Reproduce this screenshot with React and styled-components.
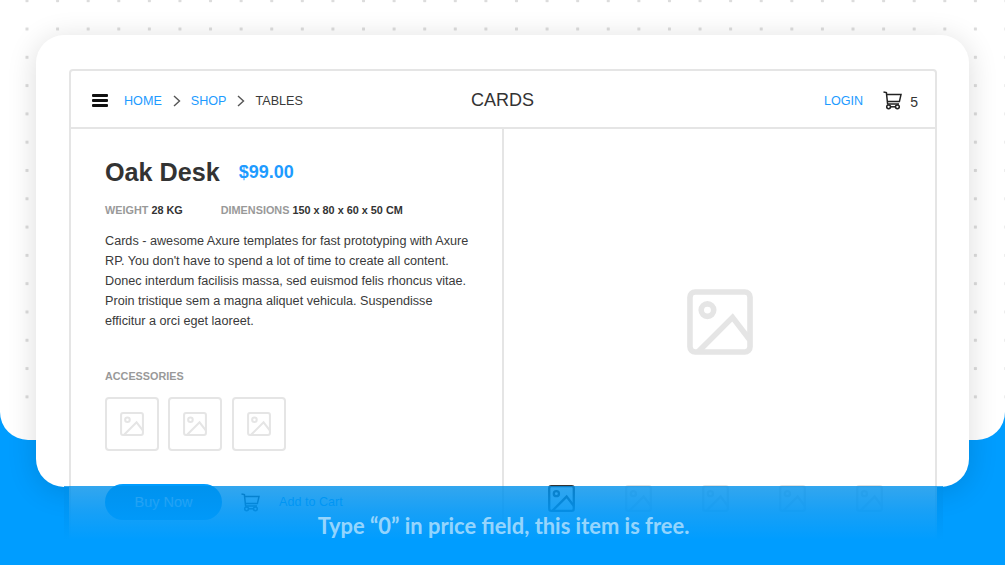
import React from "react";
import styled, { createGlobalStyle } from "styled-components";

const Global = createGlobalStyle`
  html, body { margin: 0; padding: 0; background: #009dff; }
  body { font-family: "Liberation Sans", Arial, sans-serif; }
`;

const Page = styled.div`
  position: relative;
  width: 1005px;
  height: 565px;
  overflow: hidden;
  background: #009dff;
`;

const Backdrop = styled.div`
  box-sizing: border-box;
  height: 440px;
  padding: 35px 36px 0;
  border-radius: 0 0 28px 28px;
  background:
    linear-gradient(#fff, #fff) bottom / 100% 30px no-repeat,
    radial-gradient(circle, #dcdcdc 0, #dcdcdc 1.4px, transparent 2px) 11.7px 14.85px / 30.6px 28.3px,
    #fff;
`;

const Card = styled.div`
  box-sizing: border-box;
  width: 933px;
  height: 452px;
  padding: 34px 32px 0 33px;
  border-radius: 28px;
  background: #fff;
  box-shadow: 0 4px 30px rgba(0, 0, 0, 0.14);
`;

const Wireframe = styled.div`
  box-sizing: border-box;
  width: 868px;
  height: 500px;
  border: 2px solid #e5e5e5;
  border-radius: 4px;
  background: #fff;
  color: #333;
`;

const Header = styled.header`
  box-sizing: border-box;
  height: 58px;
  padding: 3px 17px 0 21px;
  display: grid;
  grid-template-columns: 1fr auto 1fr;
  align-items: center;
  border-bottom: 2px solid #e5e5e5;
`;

const NavLeft = styled.nav`
  display: flex;
  align-items: center;
  font-size: 12.6px;
`;

const Burger = styled.span`
  display: flex;
  flex-direction: column;
  gap: 2px;
  width: 16px;
  margin-right: 16px;
  & > i { display: block; height: 3px; border-radius: 1px; background: #111; }
`;

const Crumb = styled.span`
  color: ${(p) => (p.$current ? "#3a3a3a" : "#1e9bff")};
`;

const Chevron = styled.svg`
  width: 8px;
  height: 12px;
  margin: 0 10px 0 11px;
  fill: none;
  stroke: #555;
  stroke-width: 1.4;
`;

const Brand = styled.h1`
  margin: 0 5px 0 0;
  font-size: 18px;
  font-weight: 400;
  color: #333;
`;

const NavRight = styled.div`
  display: flex;
  align-items: center;
  justify-content: flex-end;
`;

const Login = styled.span`
  font-size: 12.6px;
  color: #1e9bff;
  margin-right: 20px;
`;

const CartCount = styled.span`
  font-size: 14px;
  color: #333;
  margin: 2px 0 0 8px;
`;

const CartIcon = styled.svg`
  display: block;
  flex: none;
  width: 19px;
  height: 19px;
  fill: none;
  stroke: #222;
  stroke-width: 1.5;
`;

const Body = styled.div`
  display: grid;
  grid-template-columns: 433px 1fr;
  height: 440px;
`;

const Info = styled.section`
  box-sizing: border-box;
  padding: 27px 34px 0 34px;
  border-right: 2px solid #e5e5e5;
`;

const TitleRow = styled.div`
  display: flex;
  align-items: center;
  gap: 19px;
  height: 32px;
`;

const Title = styled.h2`
  margin: 0;
  font-size: 25.2px;
  font-weight: 700;
  color: #333;
`;

const Price = styled.span`
  font-size: 18px;
  font-weight: 700;
  color: #1e9bff;
`;

const Meta = styled.div`
  display: flex;
  gap: 38px;
  margin-top: 15px;
  font-size: 10.85px;
  line-height: 14px;
  font-weight: 700;
  color: #333;
`;

const MetaLabel = styled.span`
  color: #999;
`;

const Description = styled.p`
  margin: 14px 0 0;
  width: 368px;
  font-size: 12.65px;
  line-height: 20px;
  color: #3a3a3a;
`;

const SectionLabel = styled.h3`
  margin: 38px 0 0;
  font-size: 10.8px;
  line-height: 14px;
  font-weight: 700;
  color: #999;
`;

const ThumbRow = styled.div`
  display: flex;
  gap: 9.3px;
  margin-top: 14px;
`;

const Thumb = styled.div`
  box-sizing: border-box;
  width: 54px;
  height: 54px;
  display: flex;
  align-items: center;
  justify-content: center;
  border: 2px solid #e5e5e5;
  border-radius: 4px;
`;

const Actions = styled.div`
  display: flex;
  align-items: center;
  margin-top: 33px;
`;

const BuyButton = styled.button`
  width: 117px;
  height: 36px;
  padding: 0;
  border: 0;
  border-radius: 18px;
  background: #009dff;
  color: #fff;
  font: 400 14.5px "Liberation Sans", Arial, sans-serif;
`;

const AddToCart = styled.span`
  margin-left: 19px;
  font-size: 12.6px;
  color: #009dff;
`;

const CartSlot = styled.span`
  margin-left: 19px;
`;

const Gallery = styled.section`
  display: flex;
  flex-direction: column;
  align-items: center;
  padding-top: 160px;
`;

const Thumbs = styled.div`
  display: flex;
  gap: 50px;
  margin: 130px 9px 0 0;
`;

const PictureSvg = styled.svg`
  display: block;
  flex: none;
  width: ${(p) => p.$size}px;
  height: ${(p) => p.$size}px;
  fill: none;
  stroke: ${(p) => p.$color || "#e5e5e5"};
  stroke-width: 8.5;
`;

const Fade = styled.div`
  position: absolute;
  left: 64px;
  top: 486px;
  width: 879px;
  height: 79px;
  display: flex;
  justify-content: center;
  padding-top: 26px;
  box-sizing: border-box;
  background: linear-gradient(
    rgba(0, 144, 234, 0.8) 0,
    rgba(0, 150, 245, 0.9) 30%,
    rgba(0, 157, 255, 1) 68%
  );
`;

const Caption = styled.p`
  margin: 0;
  font-family: Lato, sans-serif;
  font-size: 21.9px;
  line-height: 27px;
  font-weight: 700;
  color: rgba(255, 255, 255, 0.58);
`;

const Picture = ({ size, color }) => (
  <PictureSvg viewBox="0 0 100 100" $size={size} $color={color}>
    <rect x="4.5" y="4.5" width="91" height="91" rx="8" />
    <circle cx="31" cy="32" r="9.5" />
    <path d="M17 95 L69 43 L95 77" />
  </PictureSvg>
);

const Cart = () => (
  <CartIcon viewBox="0 0 19 19">
    <path d="M0.5 1 L3.4 1.6 L4.6 13 H16" />
    <path d="M3.7 3.6 H18 L16.4 10.6 H4.3" />
    <circle cx="5.6" cy="15.8" r="1.9" />
    <circle cx="14.4" cy="15.8" r="1.9" />
    <path d="M7.5 15.8 H12.5" />
  </CartIcon>
);

const Sep = () => (
  <Chevron viewBox="0 0 8 12">
    <path d="M1 1 L6.5 6 L1 11" />
  </Chevron>
);

export default function App() {
  return (
    <Page>
      <Global />
      <Backdrop>
        <Card>
          <Wireframe>
            <Header>
              <NavLeft>
                <Burger><i /><i /><i /></Burger>
                <Crumb>HOME</Crumb>
                <Sep />
                <Crumb>SHOP</Crumb>
                <Sep />
                <Crumb $current>TABLES</Crumb>
              </NavLeft>
              <Brand>CARDS</Brand>
              <NavRight>
                <Login>LOGIN</Login>
                <Cart />
                <CartCount>5</CartCount>
              </NavRight>
            </Header>
            <Body>
              <Info>
                <TitleRow>
                  <Title>Oak Desk</Title>
                  <Price>$99.00</Price>
                </TitleRow>
                <Meta>
                  <span><MetaLabel>WEIGHT</MetaLabel> 28 KG</span>
                  <span><MetaLabel>DIMENSIONS</MetaLabel> 150 x 80 x 60 x 50 CM</span>
                </Meta>
                <Description>
                  Cards - awesome Axure templates for fast prototyping with Axure RP. You don't have to spend a lot of time to create all content. Donec interdum facilisis massa, sed euismod felis rhoncus vitae. Proin tristique sem a magna aliquet vehicula. Suspendisse efficitur a orci eget laoreet.
                </Description>
                <SectionLabel>ACCESSORIES</SectionLabel>
                <ThumbRow>
                  <Thumb><Picture size={24} /></Thumb>
                  <Thumb><Picture size={24} /></Thumb>
                  <Thumb><Picture size={24} /></Thumb>
                </ThumbRow>
                <Actions>
                  <BuyButton>Buy Now</BuyButton>
                  <CartSlot><Cart /></CartSlot>
                  <AddToCart>Add to Cart</AddToCart>
                </Actions>
              </Info>
              <Gallery>
                <Picture size={66} />
                <Thumbs>
                  <Picture size={27} color="#333" />
                  <Picture size={27} />
                  <Picture size={27} />
                  <Picture size={27} />
                  <Picture size={27} />
                </Thumbs>
              </Gallery>
            </Body>
          </Wireframe>
        </Card>
      </Backdrop>
      <Fade>
        <Caption>Type “0” in price field, this item is free.</Caption>
      </Fade>
    </Page>
  );
}
